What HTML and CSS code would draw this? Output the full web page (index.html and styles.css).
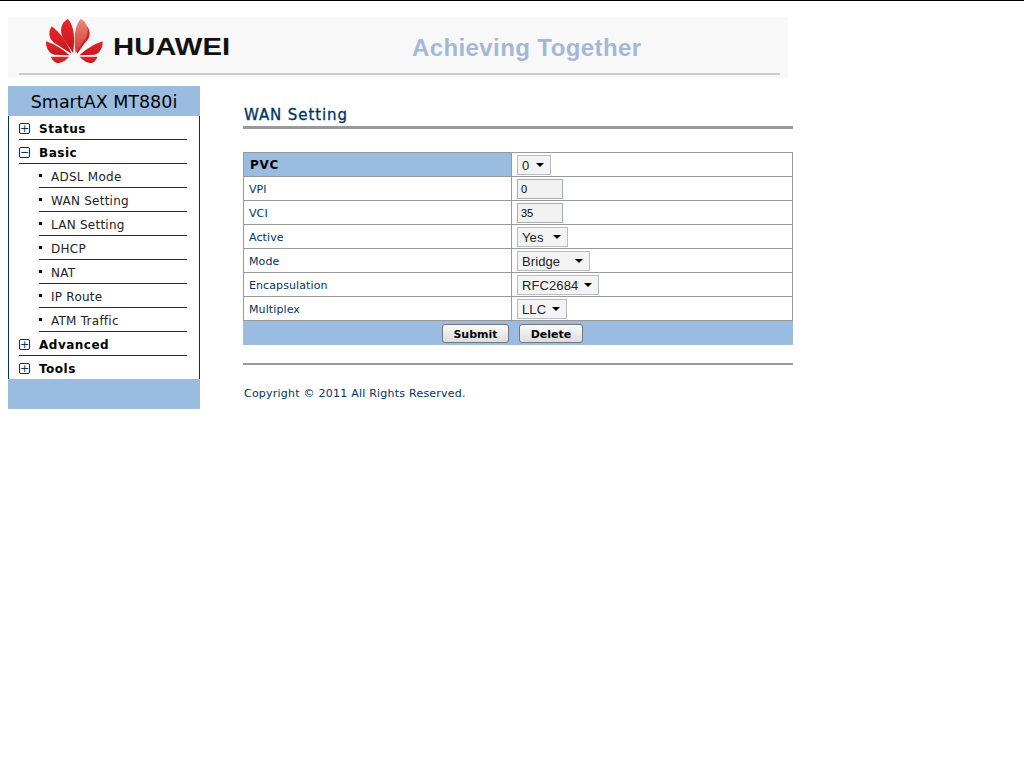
FILE: index.html
```html
<!DOCTYPE html>
<html lang="en">
<head>
  <meta charset="UTF-8">
  <title>WAN Setting</title>
  <link rel="stylesheet" href="styles.css">
</head>
<body>
  <div class="header">
    <svg class="logo" width="57" height="45" viewBox="45 25 177 135" preserveAspectRatio="none">
      <defs>
        <linearGradient id="petal" x1="0" y1="0" x2="0" y2="1">
          <stop offset="0" stop-color="#e8262a"/>
          <stop offset="1" stop-color="#c5161d"/>
        </linearGradient>
        <linearGradient id="petalLight" x1="0" y1="0" x2="0" y2="1">
          <stop offset="0" stop-color="#e58a78"/>
          <stop offset="1" stop-color="#d8352f"/>
        </linearGradient>
      </defs>
      <g fill="url(#petal)">
        <path d="M113 28C92 38 86 62 97 84L129 130C135 90 134 50 113 28Z"/>
        <path d="M63 50C50 68 54 88 70 99L124 132C110 97 88 68 63 50Z"/>
        <path d="M45 95C44 115 55 131 70 135L118 137C98 120 72 103 45 95Z"/>
        <path d="M60 141L117 141C106 152 95 160 80 160C70 158 64 150 60 141Z"/>
        <path d="M173 50C186 68 182 88 166 99L142 132C130 97 148 68 173 50Z"/>
        <path d="M221 95C222 115 211 131 196 135L148 137C168 120 194 103 221 95Z"/>
        <path d="M205 141L149 141C160 152 171 160 186 160C196 158 201 150 205 141Z"/>
      </g>
      <path fill="url(#petalLight)" d="M153 28C174 38 180 62 169 84L137 130C131 90 132 50 153 28Z"/>
    </svg>
    <span class="brand">HUAWEI</span>
    <span class="slogan">Achieving Together</span>
  </div>

  <div class="page">
    <div class="sidebar">
      <div class="product">SmartAX MT880i</div>
      <ul class="menu">
        <li class="top"><span class="box">+</span>Status</li>
        <li class="top"><span class="box">&minus;</span>Basic</li>
        <li class="sub">ADSL Mode</li>
        <li class="sub">WAN Setting</li>
        <li class="sub">LAN Setting</li>
        <li class="sub">DHCP</li>
        <li class="sub">NAT</li>
        <li class="sub">IP Route</li>
        <li class="sub">ATM Traffic</li>
        <li class="top"><span class="box">+</span>Advanced</li>
        <li class="top last"><span class="box">+</span>Tools</li>
      </ul>
      <div class="sidebar-foot"></div>
    </div>

    <div class="content">
      <h1>WAN Setting</h1>
      <form>
        <table class="settings">
          <tr>
            <th>PVC</th>
            <td><span class="select w34"><select><option>0</option></select></span></td>
          </tr>
          <tr>
            <td class="label">VPI</td>
            <td><input type="text" value="0"></td>
          </tr>
          <tr>
            <td class="label">VCI</td>
            <td><input type="text" value="35"></td>
          </tr>
          <tr>
            <td class="label">Active</td>
            <td><span class="select w51"><select><option>Yes</option></select></span></td>
          </tr>
          <tr>
            <td class="label">Mode</td>
            <td><span class="select w73"><select><option>Bridge</option></select></span></td>
          </tr>
          <tr>
            <td class="label">Encapsulation</td>
            <td><span class="select w82"><select><option>RFC2684</option></select></span></td>
          </tr>
          <tr>
            <td class="label">Multiplex</td>
            <td><span class="select w50"><select><option>LLC</option></select></span></td>
          </tr>
        </table>
        <div class="actions">
          <button type="button" class="submit-btn">Submit</button>
          <button type="button" class="delete-btn">Delete</button>
        </div>
      </form>
      <div class="rule"></div>
      <p class="copyright">Copyright &copy; 2011 All Rights Reserved.</p>
    </div>
  </div>
</body>
</html>
```

FILE: styles.css
```css
body {
  margin: 0;
  border-top: 1px solid #000;
  background-color: #fff;
  font-family: "DejaVu Sans", sans-serif;
  font-size: 11px;
}
.header {
  position: relative;
  display: flex;
  align-items: flex-start;
  width: 780px;
  height: 61px;
  margin: 16px 0 0 8px;
  background-color: #f8f8f8;
}
.header::after {
  content: "";
  position: absolute;
  left: 11px;
  right: 8px;
  top: 56px;
  height: 2px;
  background-color: #ccc;
}
.logo {
  margin: 1px 0 0 38px;
}
.brand {
  margin: 13px 0 0 10px;
  width: 116px;
  font-family: "Liberation Sans", sans-serif;
  font-weight: bold;
  font-size: 24px;
  line-height: 34px;
  color: #111;
  transform: scaleX(1.22);
  transform-origin: left;
}
.slogan {
  margin: 16px 0 0 183px;
  font-family: "Liberation Sans", sans-serif;
  font-weight: bold;
  font-size: 24px;
  line-height: 30px;
  letter-spacing: 0.4px;
  color: #a3b8d6;
}
.page {
  display: flex;
  margin: 8px 0 0 8px;
}
.sidebar {
  width: 192px;
}
.product {
  height: 30px;
  line-height: 32px;
  text-align: center;
  font-size: 17.5px;
  color: #000;
  background-color: #9abce0;
}
.menu {
  list-style: none;
  margin: 0;
  padding: 0 12px 0 10px;
  border-left: 1px solid #003366;
  border-right: 1px solid #003366;
}
.menu li {
  height: 23px;
  line-height: 26px;
  border-bottom: 1px solid #003366;
}
.menu .top {
  display: flex;
  align-items: center;
  box-sizing: border-box;
  height: 24px;
  padding-top: 3px;
  font-weight: bold;
  font-size: 12px;
  letter-spacing: 0.5px;
  color: #000;
}
.menu .last {
  border-bottom: none;
  height: 23px;
}
.box {
  width: 9px;
  height: 9px;
  margin: 0 9px 1px 0;
  border: 1px solid #003366;
  border-radius: 2px;
  font-weight: normal;
  font-size: 11px;
  line-height: 9px;
  letter-spacing: 0;
  text-align: center;
  color: #003366;
}
.menu .sub {
  position: relative;
  margin-left: 20px;
  padding-left: 12px;
  font-size: 12px;
  letter-spacing: 0.25px;
  color: #222;
}
.menu .sub::before {
  content: "";
  position: absolute;
  left: 0;
  top: 10px;
  width: 3px;
  height: 3px;
  background-color: #000;
}
.sidebar-foot {
  height: 30px;
  background-color: #9abce0;
}
.content {
  width: 550px;
  margin-left: 43px;
}
h1 {
  margin: 19px 0 0;
  height: 21px;
  padding-left: 1px;
  border-bottom: 3px solid #999;
  font-weight: normal;
  font-size: 15px;
  line-height: 20px;
  letter-spacing: 0.9px;
  -webkit-text-stroke: 0.3px #003366;
  color: #003366;
}
form {
  margin: 0;
}
.settings {
  width: 550px;
  margin-top: 23px;
  border-collapse: collapse;
  table-layout: fixed;
}
.settings th,
.settings td {
  height: 23px;
  padding: 0;
  border: 1px solid #999;
}
.settings th {
  width: 261px;
  padding: 1px 0 0 6px;
  height: 22px;
  text-align: left;
  font-size: 12px;
  letter-spacing: 0.7px;
  color: #000;
  background-color: #9abce0;
}
.settings .label {
  padding: 1px 0 0 5px;
  height: 22px;
  font-size: 11px;
  letter-spacing: 0.1px;
  color: #003366;
}
.settings td:last-child {
  padding-left: 5px;
}
input {
  display: block;
  box-sizing: border-box;
  width: 46px;
  height: 20px;
  padding: 0 3px;
  border: 1px solid #a5acb2;
  background-color: #f2f2f2;
  font-family: "Liberation Sans", sans-serif;
  font-size: 11px;
  color: #000;
}
.select {
  position: relative;
  display: block;
  box-sizing: border-box;
  height: 20px;
  border: 1px solid #b5bcc4;
  background-color: #f4f4f4;
}
.select::after {
  content: "";
  position: absolute;
  right: 6px;
  top: 7px;
  border-left: 4px solid transparent;
  border-right: 4px solid transparent;
  border-top: 4px solid #000;
}
.select select {
  display: block;
  box-sizing: border-box;
  width: 100%;
  height: 18px;
  padding: 1px 0 0 4px;
  border: none;
  background: none;
  appearance: none;
  font-family: "Liberation Sans", sans-serif;
  font-size: 13px;
  letter-spacing: 0.1px;
  color: #222;
}
.w34 { width: 34px; }
.w50 { width: 50px; }
.w51 { width: 51px; }
.w73 { width: 73px; }
.w82 { width: 82px; }
.actions {
  display: flex;
  gap: 10px;
  height: 24px;
  padding: 3px 0 0 199px;
  box-sizing: border-box;
  background-color: #9abce0;
}
.actions button {
  height: 19px;
  padding: 1px 0 0;
  border: 1px solid #777;
  border-radius: 3px;
  background: linear-gradient(#fbfbfb, #dcdcdc);
  font-family: "DejaVu Sans", sans-serif;
  font-weight: bold;
  font-size: 11px;
  color: #000;
}
.submit-btn {
  width: 67px;
}
.delete-btn {
  width: 64px;
}
.rule {
  height: 2px;
  margin-top: 18px;
  background-color: #999;
}
.copyright {
  margin: 22px 0 0 1px;
  font-size: 11px;
  line-height: 14px;
  letter-spacing: 0.23px;
  color: #003366;
}
```
